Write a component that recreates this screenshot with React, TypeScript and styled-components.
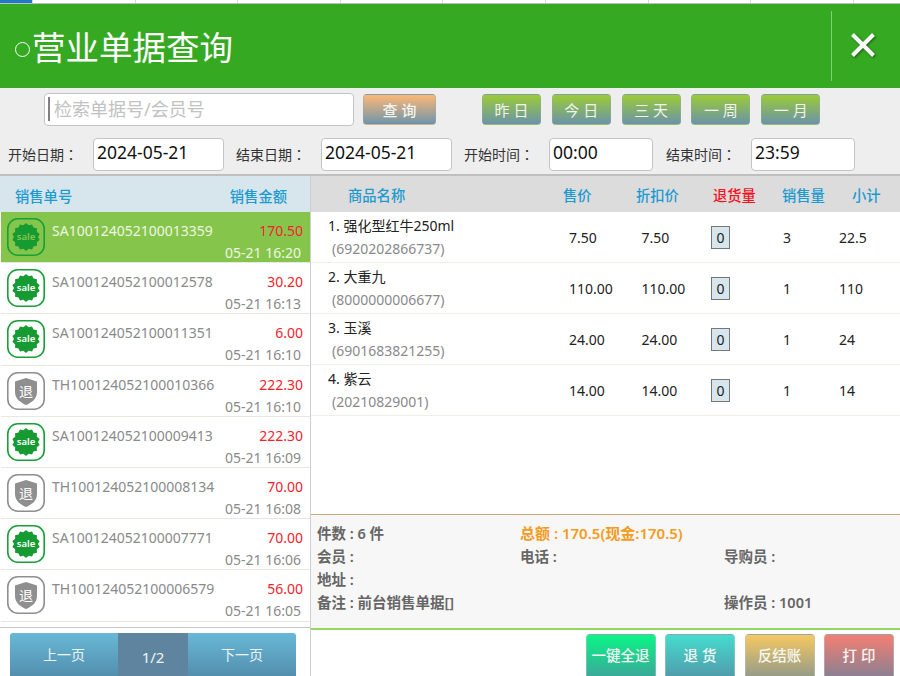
import styled, { createGlobalStyle } from "styled-components";

const GlobalStyle = createGlobalStyle`
  html, body {
    margin: 0;
    padding: 0;
    background: #fff;
  }
  * {
    box-sizing: border-box;
  }
`;

const FONT = `"Noto Sans", "Noto Sans CJK SC", sans-serif`;

const Page = styled.div`
  width: 900px;
  height: 676px;
  overflow: hidden;
  display: flex;
  flex-direction: column;
  font-family: ${FONT};
  font-size: 14px;
  background: #fff;
`;

const TabStrip = styled.div`
  height: 4px;
  flex: none;
  display: flex;
  background: #fff;
  border-bottom: 1px solid #bdbdbd;
`;

const TabPiece = styled.div<{ $active?: boolean }>`
  width: ${(p) => (p.$active ? "33px" : "102.6px")};
  background: ${(p) => (p.$active ? "#1f78c8" : "#fff")};
  border-right: 1px solid #d8d8d8;
`;

const Header = styled.header`
  height: 84px;
  flex: none;
  background: #35a922;
  display: flex;
  align-items: center;
  padding-left: 13px;
`;

const Title = styled.h1`
  flex: 1;
  margin: 3px 0 0;
  color: #fff;
  font-size: 33.5px;
  font-weight: 400;
  line-height: 1;
  display: flex;
  align-items: center;
  gap: 2px;
`;

const TitleDot = styled.span`
  width: 15px;
  height: 15px;
  margin: 4px 0 0 2px;
  border: 1.5px solid #fff;
  border-radius: 50%;
`;

const CloseArea = styled.div`
  width: 69px;
  height: 70px;
  border-left: 1px solid rgba(255, 255, 255, 0.4);
  display: flex;
  align-items: center;
  justify-content: center;
  svg {
    margin: -3px 0 0 -6px;
    filter: drop-shadow(1px 1px 1px rgba(0, 0, 0, 0.45));
  }
`;

const Toolbar = styled.div`
  height: 88px;
  flex: none;
  background: #eeeeee;
  border-bottom: 2px solid #bfbfbf;
  padding: 5px 0 0 44px;
`;

const SearchRow = styled.div`
  display: flex;
  align-items: center;
  height: 32px;
`;

const SearchBox = styled.div`
  width: 310px;
  height: 33px;
  background: #fff;
  border: 1px solid #c4c4c4;
  border-radius: 4px;
  display: flex;
  align-items: center;
  padding-left: 3px;
`;

const Caret = styled.span`
  width: 2px;
  height: 24px;
  background: #808080;
  flex: none;
`;

const SearchInput = styled.input`
  flex: 1;
  min-width: 0;
  border: 0;
  outline: 0;
  padding: 0 0 0 4px;
  background: transparent;
  font-family: ${FONT};
  font-size: 18px;
  &::placeholder {
    color: #c2c2c2;
    opacity: 1;
  }
`;

const GradientButton = styled.button<{ $from: string; $to: string; $w: number; $bold?: boolean }>`
  width: ${(p) => p.$w}px;
  height: 31px;
  padding: 0;
  border: 1px solid rgba(150, 170, 170, 0.45);
  border-radius: 4px;
  background: linear-gradient(${(p) => p.$from}, ${(p) => p.$to});
  color: #f1f4ee;
  font-family: ${FONT};
  font-size: 15px;
  font-weight: ${(p) => (p.$bold ? 500 : 400)};
  white-space: pre;
`;

const QueryGap = styled.div`
  width: 9px;
`;

const RangeButtons = styled.div`
  margin-left: 46px;
  display: flex;
  gap: 10.8px;
`;

const DateRow = styled.div`
  display: flex;
  align-items: center;
  height: 34px;
  margin: 12px 0 0 -36px;
`;

const DateLabel = styled.label<{ $w: number }>`
  width: ${(p) => p.$w}px;
  color: #333;
  font-size: 14px;
  flex: none;
`;

const Colon = styled.span`
  font-family: "Noto Sans CJK TC", sans-serif;
`;

const DateField = styled.input<{ $w: number; $mr: number }>`
  width: ${(p) => p.$w}px;
  height: 33px;
  margin-right: ${(p) => p.$mr}px;
  flex: none;
  background: #fff;
  border: 1px solid #c4c4c4;
  border-radius: 4px;
  padding: 0 0 5px 3px;
  color: #111;
  font-family: ${FONT};
  font-size: 17.5px;
  outline: 0;
`;

const Body = styled.div`
  flex: 1;
  min-height: 0;
  display: flex;
`;

const LeftPanel = styled.aside`
  width: 311px;
  flex: none;
  display: flex;
  flex-direction: column;
  border-right: 1px solid #cfcfcf;
`;

const LeftHead = styled.div`
  height: 36px;
  flex: none;
  background: #d6e6ec;
  color: #1d9ad0;
  font-size: 14.3px;
  font-weight: 500;
  display: flex;
  align-items: center;
  justify-content: space-between;
  padding: 2px 23px 0 15px;
`;

const OrderList = styled.div`
  height: 415.5px;
  flex: none;
  padding-left: 1px;
  border-bottom: 1px solid #c8c8c8;
`;

const OrderRow = styled.div<{ $active?: boolean }>`
  height: 51.2px;
  display: flex;
  align-items: center;
  padding: 0 7px 0 6px;
  background: ${(p) => (p.$active ? "#86c54c" : "#fff")};
  border-bottom: 1px solid #e9e7e2;
`;

const OrderInfo = styled.div`
  flex: 1;
  margin-left: 7px;
  padding-top: 10px;
  line-height: 22px;
`;

const InfoLine = styled.div`
  display: flex;
  justify-content: space-between;
`;

const OrderNo = styled.span<{ $active?: boolean }>`
  color: ${(p) => (p.$active ? "#eef6e2" : "#8a8a8a")};
`;

const Amount = styled.span`
  color: #f5222d;
`;

const OrderTime = styled.div<{ $active?: boolean }>`
  text-align: right;
  padding-right: 2px;
  color: ${(p) => (p.$active ? "#eef6e2" : "#8a8a8a")};
`;

const Pager = styled.div`
  margin: 5px 14px 0 10px;
  height: 60px;
  flex: none;
  display: flex;
  border-radius: 3px 3px 0 0;
  overflow: hidden;
  background: linear-gradient(#68b8d6, #4a7f9e);
  color: #eef4f6;
`;

const PagerButton = styled.div`
  flex: 1;
  padding-top: 12px;
  text-align: center;
  line-height: 20px;
`;

const PagerCount = styled.div`
  width: 70px;
  padding-top: 14px;
  text-align: center;
  font-size: 15px;
  line-height: 20px;
  background: #5f84a0;
`;

const RightPanel = styled.main`
  flex: 1;
  min-width: 0;
  display: flex;
  flex-direction: column;
`;

const TableHead = styled.div`
  height: 36px;
  flex: none;
  background: #dcdcdc;
  color: #1d9ad0;
  font-size: 14.3px;
  font-weight: 500;
  display: grid;
  grid-template-columns: 215px 73px 77px 69px 70px 1fr;
  align-items: center;
  padding: 0 0 0 37px;
`;

const ReturnHead = styled.span`
  color: #f5111d;
`;

const TableBody = styled.div`
  height: 302px;
  flex: none;
`;

const ItemRow = styled.div`
  height: 51.1px;
  display: grid;
  grid-template-columns: 241px 72.5px 69.5px 72px 56px 1fr;
  align-items: center;
  padding-left: 17px;
  color: #222;
  border-bottom: 1px solid #f1efea;
`;

const ItemCols = styled.div`
  line-height: 23px;
  margin-top: -1px;
`;

const ItemName = styled.div`
  color: #222;
`;

const ItemCode = styled.div`
  color: #8a8a8a;
  padding-left: 4px;
`;

const ReturnInput = styled.input`
  display: block;
  width: 19px;
  height: 23px;
  padding: 0;
  text-align: center;
  background: #d6e6ec;
  border: 1px solid #777;
  color: #222;
  font-family: ${FONT};
  font-size: 14px;
  outline: 0;
`;

const Summary = styled.section`
  height: 116px;
  flex: none;
  background: #f7f7f7;
  border-top: 1px solid #cfa777;
  border-bottom: 2px solid #93d75f;
  padding: 6px 0 0 6px;
  display: grid;
  grid-template-columns: 203px 204px 1fr;
  grid-auto-rows: 23px;
  align-items: center;
  color: #666;
  font-size: 14.5px;
  font-weight: 600;
`;

const TotalCell = styled.div`
  grid-column: 2 / 4;
  color: #f39c1f;
  font-size: 15px;
`;

const NoteCell = styled.div`
  grid-column: 1 / 3;
`;

const Actions = styled.div`
  flex: 1;
  display: flex;
  justify-content: flex-end;
  gap: 9.5px;
  padding: 4px 6px 0 0;
`;

const ActionButton = styled.button<{ $from: string; $to: string }>`
  width: 70px;
  height: 60px;
  padding: 0 0 19px;
  flex: none;
  border: 1px solid rgba(190, 200, 200, 0.5);
  border-radius: 4px;
  background: linear-gradient(${(p) => p.$from}, ${(p) => p.$to});
  color: #f4f7f4;
  font-family: ${FONT};
  font-size: 14.5px;
  font-weight: 500;
  white-space: pre;
`;

// scalloped badge behind the "sale" label
const burst = (cx: number, cy: number, outer: number, inner: number, points: number) => {
  const parts: string[] = [];
  for (let i = 0; i < points * 2; i++) {
    const r = i % 2 === 0 ? outer : inner;
    const a = (Math.PI * i) / points;
    parts.push(`${(cx + r * Math.sin(a)).toFixed(2)} ${(cy - r * Math.cos(a)).toFixed(2)}`);
  }
  return `M${parts.join("L")}Z`;
};

const SALE_STAR = burst(19, 19, 14, 12, 14);

const SaleIcon = ({ active }: { active?: boolean }) => (
  <svg width="38" height="38" viewBox="0 0 38 38" fill="none">
    <rect x="0.8" y="0.8" width="36.4" height="36.4" rx="10" stroke="#18a038" strokeWidth="1.6" fill={active ? "none" : "#fff"} />
    <path d={SALE_STAR} fill="#169a32" strokeLinejoin="round" />
    <text x="19" y="22" textAnchor="middle" fontSize="9.5" fontWeight="600" fill={active ? "#86c54c" : "#fff"} fontFamily="Noto Sans, sans-serif">
      sale
    </text>
  </svg>
);

const BackIcon = () => (
  <svg width="38" height="38" viewBox="0 0 38 38" fill="none">
    <rect x="0.8" y="0.8" width="36.4" height="36.4" rx="10" stroke="#8f8f8f" strokeWidth="1.6" fill="#fff" />
    <path d="M19 6l11 3.5V20c0 7-6 11-11 13-5-2-11-6-11-13V9.500z" fill="#8f8f8f" />
    <text x="19" y="24.500" textAnchor="middle" fontSize="14" fill="#fff" fontFamily="Noto Sans CJK SC, sans-serif">
      退
    </text>
  </svg>
);

const CloseIcon = () => (
  <svg width="28" height="28" viewBox="0 0 28 28">
    <path d="M3.500 3.500l21 21M24.500 3.500l-21 21" stroke="#fff" strokeWidth="4" fill="none" />
  </svg>
);

const ORDERS = [
  { no: "SA100124052100013359", amount: "170.50", time: "05-21 16:20", back: false },
  { no: "SA100124052100012578", amount: "30.20", time: "05-21 16:13", back: false },
  { no: "SA100124052100011351", amount: "6.00", time: "05-21 16:10", back: false },
  { no: "TH100124052100010366", amount: "222.30", time: "05-21 16:10", back: true },
  { no: "SA100124052100009413", amount: "222.30", time: "05-21 16:09", back: false },
  { no: "TH100124052100008134", amount: "70.00", time: "05-21 16:08", back: true },
  { no: "SA100124052100007771", amount: "70.00", time: "05-21 16:06", back: false },
  { no: "TH100124052100006579", amount: "56.00", time: "05-21 16:05", back: true },
];

const ITEMS = [
  { name: "1. 强化型红牛250ml", code: "(6920202866737)", price: "7.50", disc: "7.50", qty: "3", sum: "22.5" },
  { name: "2. 大重九", code: "(8000000006677)", price: "110.00", disc: "110.00", qty: "1", sum: "110" },
  { name: "3. 玉溪", code: "(6901683821255)", price: "24.00", disc: "24.00", qty: "1", sum: "24" },
  { name: "4. 紫云", code: "(20210829001)", price: "14.00", disc: "14.00", qty: "1", sum: "14" },
];

const RANGES = ["昨 日", "今 日", "三 天", "一 周", "一 月"];

const App = () => {
  return (
    <Page>
      <GlobalStyle />
      <TabStrip>
        <TabPiece $active />
        {Array.from({ length: 8 }, (_, i) => (
          <TabPiece key={i} />
        ))}
      </TabStrip>

      <Header>
        <Title>
          <TitleDot />
          营业单据查询
        </Title>
        <CloseArea>
          <CloseIcon />
        </CloseArea>
      </Header>

      <Toolbar>
        <SearchRow>
          <SearchBox>
            <Caret />
            <SearchInput placeholder="检索单据号/会员号" />
          </SearchBox>
          <QueryGap />
          <GradientButton $from="#fdb877" $to="#6f94ab" $w={73} $bold>
            查 询
          </GradientButton>
          <RangeButtons>
            {RANGES.map((r) => (
              <GradientButton key={r} $from="#9ccb36" $to="#6a93a9" $w={59}>
                {r}
              </GradientButton>
            ))}
          </RangeButtons>
        </SearchRow>
        <DateRow>
          <DateLabel $w={85}>开始日期<Colon>：</Colon></DateLabel>
          <DateField $w={131} $mr={12} defaultValue="2024-05-21" />
          <DateLabel $w={85}>结束日期<Colon>：</Colon></DateLabel>
          <DateField $w={131} $mr={12} defaultValue="2024-05-21" />
          <DateLabel $w={85}>开始时间<Colon>：</Colon></DateLabel>
          <DateField $w={104} $mr={13} defaultValue="00:00" />
          <DateLabel $w={85}>结束时间<Colon>：</Colon></DateLabel>
          <DateField $w={104} $mr={0} defaultValue="23:59" />
        </DateRow>
      </Toolbar>

      <Body>
        <LeftPanel>
          <LeftHead>
            <span>销售单号</span>
            <span>销售金额</span>
          </LeftHead>
          <OrderList>
            {ORDERS.map((o, i) => (
              <OrderRow key={o.no} $active={i === 0}>
                {o.back ? <BackIcon /> : <SaleIcon active={i === 0} />}
                <OrderInfo>
                  <InfoLine>
                    <OrderNo $active={i === 0}>{o.no}</OrderNo>
                    <Amount>{o.amount}</Amount>
                  </InfoLine>
                  <OrderTime $active={i === 0}>{o.time}</OrderTime>
                </OrderInfo>
              </OrderRow>
            ))}
          </OrderList>
          <Pager>
            <PagerButton>上一页</PagerButton>
            <PagerCount>1/2</PagerCount>
            <PagerButton>下一页</PagerButton>
          </Pager>
        </LeftPanel>

        <RightPanel>
          <TableHead>
            <span>商品名称</span>
            <span>售价</span>
            <span>折扣价</span>
            <ReturnHead>退货量</ReturnHead>
            <span>销售量</span>
            <span>小计</span>
          </TableHead>
          <TableBody>
            {ITEMS.map((it) => (
              <ItemRow key={it.code}>
                <ItemCols>
                  <ItemName>{it.name}</ItemName>
                  <ItemCode>{it.code}</ItemCode>
                </ItemCols>
                <span>{it.price}</span>
                <span>{it.disc}</span>
                <span>
                  <ReturnInput defaultValue="0" />
                </span>
                <span>{it.qty}</span>
                <span>{it.sum}</span>
              </ItemRow>
            ))}
          </TableBody>
          <Summary>
            <div>件数 : 6 件</div>
            <TotalCell>总额 : 170.5(现金:170.5)</TotalCell>
            <div>会员 :</div>
            <div>电话 :</div>
            <div>导购员 :</div>
            <div>地址 :</div>
            <div />
            <div />
            <NoteCell>备注 : 前台销售单据[]</NoteCell>
            <div>操作员 : 1001</div>
          </Summary>
          <Actions>
            <ActionButton $from="#0af585" $to="#4f8aa2">一键全退</ActionButton>
            <ActionButton $from="#45dcce" $to="#55849f">退 货</ActionButton>
            <ActionButton $from="#f6c862" $to="#6f8a97">反结账</ActionButton>
            <ActionButton $from="#f47f72" $to="#62809f">打 印</ActionButton>
          </Actions>
        </RightPanel>
      </Body>
    </Page>
  );
};

export default App;
